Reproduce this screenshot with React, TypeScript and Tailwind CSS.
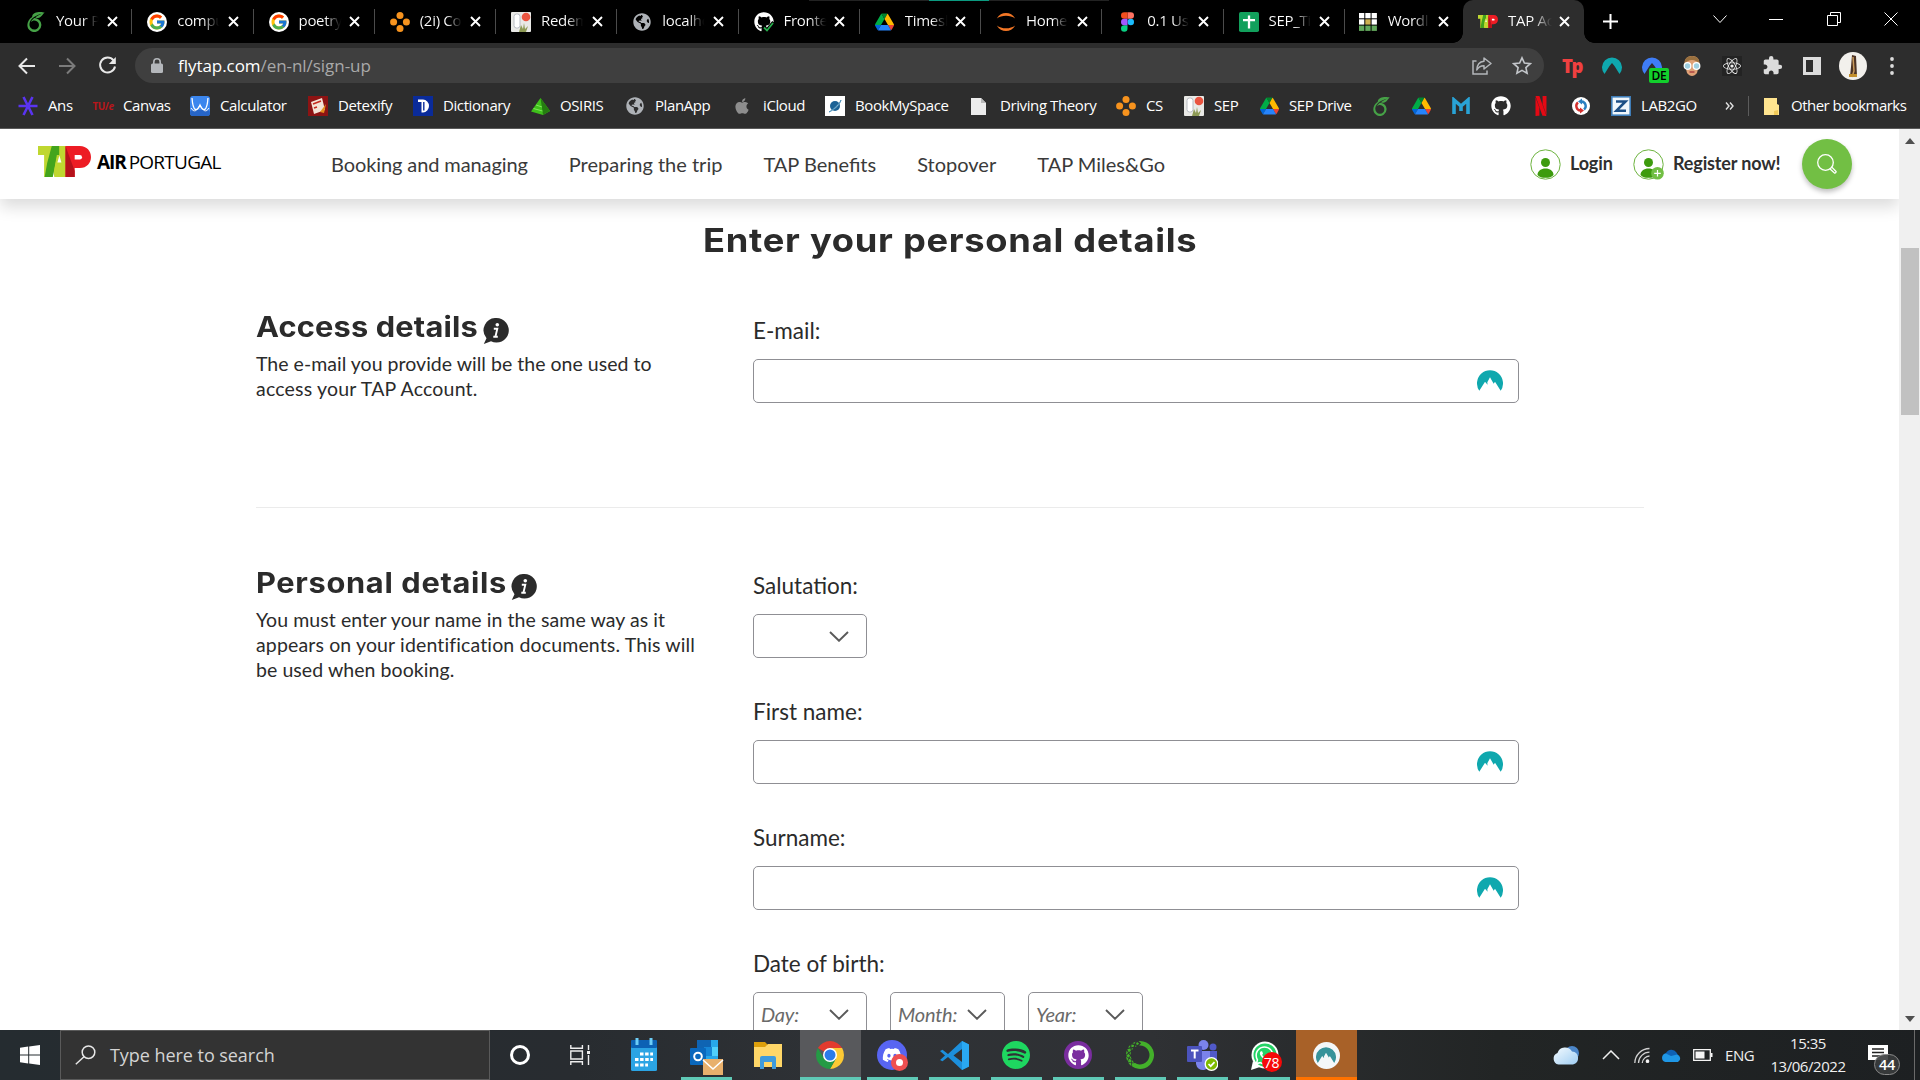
import React from "react";
import {
  SiOverleaf, SiNetflix, SiSpotify, SiAnaconda,
} from "react-icons/si";
import { FaGithub, FaApple, FaGlobeAmericas, FaReact, FaDiscord, FaWhatsapp } from "react-icons/fa";
import { FcGoogle } from "react-icons/fc";
import { MdExtension } from "react-icons/md";

/* ---------- favicons ---------- */

const Leaf = () => <SiOverleaf size={20} color="#46a247" />;
const Google = () => (
  <span className="flex h-5 w-5 items-center justify-center rounded-full bg-white"><FcGoogle size={18} /></span>
);
const Dots = () => (
  <svg width="20" height="20" viewBox="0 0 20 20" fill="#f7931e">
    <circle cx="10" cy="3.600" r="3.500" /><circle cx="10" cy="16.400" r="3.500" /><circle cx="3.600" cy="10" r="3.500" /><circle cx="16.400" cy="10" r="3.500" />
  </svg>
);
const Bottle = () => (
  <svg width="20" height="20" viewBox="0 0 20 20">
    <rect width="20" height="20" rx="1" fill="#e9e9e6" />
    <rect x="3" y="2" width="6" height="14" rx="2.500" fill="#fff" stroke="#b9bdc4" />
    <path d="M8 20l2-7 2 4 1-6 1 6 3-3-2 6z" fill="#8d9a55" />
    <circle cx="15" cy="5" r="4.300" fill="#ea5440" />
  </svg>
);
const Globe = () => (
  <span className="flex h-5 w-5 items-center justify-center"><FaGlobeAmericas size={18} color="#aeb2b7" /></span>
);
const GithubCheck = () => (
  <span className="relative block h-5 w-5">
    <FaGithub size={20} color="#fff" />
    <svg className="absolute -bottom-px -right-px" width="13" height="12" viewBox="0 0 13 12"><path d="M1.500 6.500l3.500 3.500L12 1.500" fill="none" stroke="#000" strokeWidth="4.500" /><path d="M2 6.500l3 3L11 2" fill="none" stroke="#27ae4c" strokeWidth="1.800" /></svg>
  </span>
);
const Drive = () => (
  <svg width="19" height="18" viewBox="0 0 87.3 78">
    <path d="m6.600 66.850 3.850 6.650c.8 1.400 1.950 2.500 3.300 3.300l13.750-23.800h-27.500c0 1.550.4 3.100 1.200 4.500z" fill="#0066da" />
    <path d="m43.650 25-13.750-23.800c-1.350.8-2.500 1.900-3.300 3.300l-25.400 44a9.060 9.060 0 0 0-1.200 4.500h27.500z" fill="#00ac47" />
    <path d="m73.550 76.800c1.350-.8 2.500-1.900 3.300-3.300l1.600-2.750 7.650-13.250c.8-1.400 1.200-2.950 1.200-4.500h-27.502l5.852 11.500z" fill="#ea4335" />
    <path d="m43.650 25 13.750-23.800c-1.350-.8-2.900-1.200-4.500-1.200h-18.500c-1.600 0-3.150.45-4.500 1.200z" fill="#00832d" />
    <path d="m59.800 53h-32.300l-13.750 23.800c1.350.8 2.900 1.200 4.500 1.200h50.800c1.600 0 3.150-.45 4.500-1.200z" fill="#2684fc" />
    <path d="m73.400 26.500-12.700-22c-.8-1.400-1.950-2.500-3.300-3.300l-13.750 23.800 16.150 28h27.450c0-1.550-.4-3.100-1.200-4.500z" fill="#ffba00" />
  </svg>
);
const Jupyter = () => (
  <svg width="20" height="20" viewBox="0 0 20 20" fill="#f37726">
    <path d="M.8 6.500C3 2.600 6.300 1 10 1s7 1.600 9.200 5.500C16.800 4.600 13.500 3.700 10 3.700S3.200 4.600.8 6.500z" />
    <path d="M.8 13.500C3 17.400 6.300 19 10 19s7-1.600 9.200-5.500c-2.400 1.900-5.700 2.800-9.200 2.800s-6.800-.9-9.200-2.800z" />
  </svg>
);
const Figma = () => (
  <svg width="13" height="20" viewBox="0 0 38 57">
    <path d="M19 28.500a9.500 9.500 0 1 1 19 0 9.500 9.500 0 0 1-19 0z" fill="#1abcfe" />
    <path d="M0 47.500A9.500 9.500 0 0 1 9.500 38H19v9.500a9.500 9.500 0 1 1-19 0z" fill="#0acf83" />
    <path d="M19 0v19h9.500a9.500 9.500 0 1 0 0-19z" fill="#ff7262" />
    <path d="M0 9.500A9.500 9.500 0 0 0 9.500 19H19V0H9.500A9.500 9.500 0 0 0 0 9.500z" fill="#f24e1e" />
    <path d="M0 28.500A9.500 9.500 0 0 0 9.500 38H19V19H9.500A9.500 9.500 0 0 0 0 28.500z" fill="#a259ff" />
  </svg>
);
const Sheets = () => (
  <svg width="20" height="20" viewBox="0 0 20 20">
    <rect width="20" height="20" rx="1.800" fill="#12a05c" />
    <path d="M10 3.500v13M4 8.200h12" stroke="#fff" strokeWidth="2.300" />
  </svg>
);
const Wordle = () => (
  <svg width="20" height="20" viewBox="0 0 20 20">
    <rect x="1" y="1" width="5.300" height="5.300" fill="#fff" /><rect x="7.300" y="1" width="5.300" height="5.300" fill="#fff" /><rect x="13.600" y="1" width="5.300" height="5.300" fill="#fff" />
    <rect x="1" y="7.300" width="5.300" height="5.300" fill="#fff" /><rect x="7.300" y="7.300" width="5.300" height="5.300" fill="#cdb050" /><rect x="13.600" y="7.300" width="5.300" height="5.300" fill="#fff" />
    <rect x="1" y="13.600" width="5.300" height="5.300" fill="#63a85c" /><rect x="7.300" y="13.600" width="5.300" height="5.300" fill="#63a85c" /><rect x="13.600" y="13.600" width="5.300" height="5.300" fill="#63a85c" />
  </svg>
);
const TapMark = ({ w, h }: { w: number; h: number }) => (
  <svg width={w} height={h} viewBox="0 0 52 31" preserveAspectRatio="none">
    <path d="M0 0h28v31H16l-1-6-1 6H6V9H0z" fill="#bfd730" />
    <path d="M13.500 0h7.500v9h-2L14.500 31H6.500l2.500-14z" fill="#43a41c" />
    <path d="M21 0h7v31h-7.500l-.5-5h-4.500L18.500 9H21z" fill="#bfd730" />
    <path d="M19 16.500l2-7 2 7z" fill="#fff" />
    <path d="M27 0h14c7 0 11 5 11 11s-4 11-11 11h-5v9h-9z" fill="#ed1c24" />
    <path d="M27 0l9 25v6h-9z" fill="#b5121b" />
    <path d="M36 9h5a2.200 2.200 0 0 1 0 4.400h-5z" fill="#fff" />
  </svg>
);
const Close = () => (
  <svg width="11" height="11" viewBox="0 0 11 11"><path d="M1 1l9 9M10 1l-9 9" stroke="#fff" strokeWidth="1.900" /></svg>
);

const tabs: { icon: React.ReactNode; text: string }[] = [
  { icon: <Leaf />, text: "Your P" },
  { icon: <Google />, text: "compu" },
  { icon: <Google />, text: "poetry" },
  { icon: <Dots />, text: "(2i) Co" },
  { icon: <Bottle />, text: "Redem" },
  { icon: <Globe />, text: "localho" },
  { icon: <GithubCheck />, text: "Fronte" },
  { icon: <Drive />, text: "Timesh" },
  { icon: <Jupyter />, text: "Home" },
  { icon: <Figma />, text: "0.1 Us" },
  { icon: <Sheets />, text: "SEP_Ti" },
  { icon: <Wordle />, text: "Wordl" },
];

function TabBody({ icon, text, active }: { icon: React.ReactNode; text: string; active?: boolean }) {
  return (
    <>
      <span className="flex w-5 justify-center">{icon}</span>
      <span className={"ml-2.5 block w-[44px] whitespace-nowrap bg-clip-text pb-0.5 text-transparent bg-linear-to-r from-white from-60% " + (active ? "to-[#2d2d2d]" : "to-black")}>{text}</span>
      <span className="ml-[6px] flex w-3 justify-center"><Close /></span>
    </>
  );
}

function TabStrip() {
  return (
    <div className="relative flex h-[43px] items-center bg-black pl-[11px] text-[15px] tracking-[-0.300px] text-white">
      <div className="absolute left-[809px] top-0 flex h-px w-[300px] bg-[#222]"><span className="ml-[120px] w-[60px] bg-[#0b9a80]" /></div>
      {tabs.map((t, i) => (
        <div key={i} className={"flex h-[25px] shrink-0 items-center border-r " + (i === 11 ? "w-[118.250px] border-transparent pl-[13px]" : "w-[121.250px] border-[#4b4b4b] pl-[15px]")}>
          <TabBody {...t} />
        </div>
      ))}
      <div className="relative flex h-full w-[121px] items-center rounded-t-[10px] bg-[#2d2d2d] pl-[15px]">
        <span className="absolute -left-2.5 bottom-0 h-2.5 w-2.5 bg-[radial-gradient(circle_at_0_0,transparent_9.500px,#2d2d2d_10px)]" />
        <span className="absolute -right-2.5 bottom-0 h-2.5 w-2.5 bg-[radial-gradient(circle_at_100%_0,transparent_9.500px,#2d2d2d_10px)]" />
        <TabBody icon={<TapMark w={20} h={13} />} text="TAP Ac" active />
      </div>
      <svg className="ml-[19px]" width="15" height="15" viewBox="0 0 15 15"><path d="M7.500 0v15M0 7.500h15" stroke="#fff" strokeWidth="2" /></svg>
      <div className="ml-auto flex items-center pr-[22px] pb-1.5">
        <svg width="14" height="14" viewBox="0 0 14 14" className="mr-[42px]"><path d="M.5 3.500l6.500 7 6.500-7" fill="none" stroke="#fff" /></svg>
        <svg width="14" height="14" viewBox="0 0 14 14" className="mr-[44px]"><path d="M0 7.500h14" stroke="#fff" /></svg>
        <svg width="14" height="14" viewBox="0 0 14 14" className="mr-[43px]"><path d="M.5 3.500h10v10H.5zM3.500 3.500v-3h10v10h-3" fill="none" stroke="#fff" /></svg>
        <svg width="14" height="14" viewBox="0 0 14 14"><path d="M.5.5l13 13M13.500.5l-13 13" stroke="#fff" /></svg>
      </div>
    </div>
  );
}

const NordArc = ({ size, color }: { size: number; color: string }) => (
  <svg width={size} height={size * 0.82} viewBox="0 0 26 21">
    <path d="M2.300 20.500A13 13 0 1 1 23.700 20.500L18 11.500l-1.300 2-3.700-6.300-2.700 5 .3 2.300-2.600-3z" fill={color} />
  </svg>
);

function Toolbar() {
  return (
    <div className="flex h-[45px] items-center bg-[#2d2d2d]">
      <div className="flex w-[135px] items-center pl-[18px]">
        <svg width="18" height="18" viewBox="0 0 18 18" className="mr-[22px]"><path d="M17 9H2M9 1.500L1.500 9 9 16.500" fill="none" stroke="#e8e8e8" strokeWidth="2" /></svg>
        <svg width="18" height="18" viewBox="0 0 18 18" className="mr-[22px]"><path d="M1 9h15M9 1.500L16.500 9 9 16.500" fill="none" stroke="#7b7b7b" strokeWidth="2" /></svg>
        <svg width="19" height="19" viewBox="0 0 19 19"><path d="M15.500 4.300A7.500 7.500 0 1 0 17 10.500" fill="none" stroke="#e8e8e8" strokeWidth="2" /><path d="M17.800 1v7h-7z" fill="#e8e8e8" /></svg>
      </div>
      <div className="flex h-[35px] w-[1409px] items-center rounded-full bg-[#3f3f3f] pl-4">
        <svg width="12" height="15" viewBox="0 0 12 15"><path d="M2.800 6V4a3.200 3.200 0 0 1 6.400 0v2" fill="none" stroke="#b4b7bb" strokeWidth="1.600" /><rect x="0" y="5.500" width="12" height="9.500" rx="1.500" fill="#b4b7bb" /></svg>
        <span className="ml-[15px] text-[17px] tracking-[-0.050px] text-[#a9a9a9]"><span className="text-white">flytap.com</span>/en-nl/sign-up</span>
        <svg width="20" height="18" viewBox="0 0 20 18" className="ml-auto mr-5" fill="none" stroke="#b4b7bb" strokeWidth="1.500"><path d="M4.500 4H1v13h14v-3.500" /><path d="M12 1l7 5.500-7 5.500V8.700C8.500 8.700 6.200 10 4.800 13 5 8 7.500 4.700 12 4.300z" strokeLinejoin="round" /></svg>
        <svg width="20" height="19" viewBox="0 0 20 19" className="mr-3" fill="none" stroke="#c3c6ca" strokeWidth="1.600"><path d="M10 1.800l2.400 5.300 5.800.6-4.300 3.900 1.200 5.700-5.100-2.900-5.100 2.900 1.200-5.700L1.800 7.700l5.800-.6z" /></svg>
      </div>
      <div className="ml-[18px] flex items-center gap-5">
        <span className="w-5 text-center text-[18.500px] font-extrabold leading-5 tracking-[-1.500px] text-[#f04040]">Tp</span>
        <svg width="20" height="17" viewBox="0 0 20 17"><path d="M2.500 17a10 10 0 1 1 15 0L12.500 9 10 6 7.500 9z" fill="#0fa8ae" /></svg>
        <span className="relative flex h-5 w-5 items-start pt-px">
          <svg width="20" height="17" viewBox="0 0 20 17"><path d="M2.500 17a10 10 0 1 1 15 0L12.500 9 10 6 7.500 9z" fill="#3f7df6" /></svg>
          <span className="absolute left-[7px] top-3 h-[15px] w-5 rounded-[2px] bg-[#12cf2c] text-center text-[12px] font-semibold leading-[15px] tracking-[-0.300px] text-black">DE</span>
        </span>
        <svg width="20" height="20" viewBox="0 0 20 20"><path d="M3 9C2 3 5 0 10 0s8 3 7 9l-2 8c-3 4-7 4-10 0z" fill="#dfa176" /><path d="M2.500 8C2 3 5 0 10 0s8 3 7.500 8C15 5 13 4 10 4S5 5 2.500 8z" fill="#99703f" /><circle cx="5.500" cy="10" r="3.300" fill="#9ecfe0" stroke="#fff" strokeWidth="1.300" /><circle cx="14.500" cy="10" r="3.300" fill="#9ecfe0" stroke="#fff" strokeWidth="1.300" /><path d="M7.500 16h5" stroke="#a5323a" strokeWidth="1.300" /></svg>
        <span className="flex h-5 w-5 items-center justify-center bg-[#232323]"><FaReact size={18} color="#eee" /></span>
        <MdExtension size={21} color="#dcdcdc" className="-mr-px" />
        <svg width="20" height="20" viewBox="0 0 20 20"><path d="M1 1h18v18H1zM4 4v12h7V4z" fill="#dcdcdc" fillRule="evenodd" /></svg>
        <svg width="28" height="28" viewBox="0 0 28 28" className="-mx-[3px]"><circle cx="14" cy="14" r="14" fill="#f2f0ec" /><path d="M13 3l4 1 1 20h-7l1-9z" fill="#4d3425" /><path d="M14 5l1 14-2 6" stroke="#c99a5b" strokeWidth="1.500" fill="none" /><path d="M10 22h8v3h-8z" fill="#c28f2c" /></svg>
        <svg width="20" height="18" viewBox="0 0 20 18" fill="#dcdcdc" className="-ml-0.5"><circle cx="10" cy="2" r="1.900" /><circle cx="10" cy="9" r="1.900" /><circle cx="10" cy="16" r="1.900" /></svg>
      </div>
    </div>
  );
}

/* ---------- bookmarks ---------- */

const bookmarks: { w: string; icon: React.ReactNode; text?: string }[] = [
  { w: "w-[75px]", text: "Ans", icon: <svg width="20" height="20" viewBox="0 0 20 20"><path d="M10 10L5.500 1M10 10l4.500-9M10 10H.5M10 10h9.500M10 10l-4.500 9M10 10l4.500 9" stroke="#5a34f0" strokeWidth="2.600" /></svg> },
  { w: "w-[97px]", text: "Canvas", icon: <span className="text-[10px] font-bold leading-5 tracking-[-0.500px] text-[#b8161b]">TU/<i>e</i></span> },
  { w: "w-[118px]", text: "Calculator", icon: <svg width="20" height="20" viewBox="0 0 20 20"><rect width="20" height="20" rx="3" fill="#3b86ee" /><rect y="14" width="20" height="6" rx="3" fill="#2665c8" /><path d="M2 2c1 14 5 14 8 7 3 7 7 7 8-7" fill="none" stroke="#fff" strokeWidth="1.300" /><path d="M1 12c3 5 6 3 9-3 3 6 6 8 9 3" fill="none" stroke="#fff" /></svg> },
  { w: "w-[105px]", text: "Detexify", icon: <svg width="20" height="20" viewBox="0 0 20 20"><rect width="20" height="20" fill="#8d1313" /><path d="M3 6l11-4 3 12-11 4z" fill="#f4e3d6" /><path d="M5 8l8-3M6 12l3-1" stroke="#c52a1d" strokeWidth="1.600" /><path d="M12 16l6-8-2 9z" fill="#e4901e" /></svg> },
  { w: "w-[117px]", text: "Dictionary", icon: <svg width="20" height="20" viewBox="0 0 20 20"><rect width="20" height="20" fill="#0a2b9a" /><path d="M5 3.500h5a6 6.500 0 0 1 0 13H8.500V6H5z" fill="#fff" /><path d="M10.800 6v8.500" stroke="#0a2b9a" strokeWidth="1.400" /></svg> },
  { w: "w-[95px]", text: "OSIRIS", icon: <svg width="19" height="17" viewBox="0 0 19 17"><path d="M9.500 0L19 13l-7 4L0 13.500z" fill="#3fc01b" /><path d="M9.500 0L19 13l-7 4z" fill="#257d10" /><path d="M5 7l6 2M2.500 10.500l9 2.500" stroke="#7ee85a" /></svg> },
  { w: "w-[108px]", text: "PlanApp", icon: <Globe /> },
  { w: "w-[92px]", text: "iCloud", icon: <FaApple size={18} color="#8d8d8d" className="-ml-0.5" /> },
  { w: "w-[145px]", text: "BookMySpace", icon: <svg width="20" height="20" viewBox="0 0 20 20"><rect width="20" height="20" fill="#fff" /><circle cx="10" cy="10" r="5" fill="#1b6296" /><path d="M4 16C7 14 14 9 16 4c-1 5-7 10-12 12z" fill="#fff" stroke="#3b86b3" strokeWidth=".8" /></svg> },
  { w: "w-[146px]", text: "Driving Theory", icon: <svg width="17" height="19" viewBox="0 0 17 19" className="-ml-1"><path d="M1 1h10l5 5v12H1z" fill="#ececec" /><path d="M11 1v5h5z" fill="#b9b9b9" /></svg> },
  { w: "w-[68px]", text: "CS", icon: <Dots /> },
  { w: "w-[75px]", text: "SEP", icon: <Bottle /> },
  { w: "w-[112px]", text: "SEP Drive", icon: <Drive /> },
  { w: "w-10", icon: <SiOverleaf size={19} color="#46a247" /> },
  { w: "w-10", icon: <Drive /> },
  { w: "w-10", icon: <svg width="18" height="18" viewBox="0 0 18 18"><path d="M2 17V3l7 6 7-6v14M9 9v5" fill="none" stroke="#29a3d6" strokeWidth="3.600" /></svg> },
  { w: "w-10", icon: <FaGithub size={20} color="#fff" /> },
  { w: "w-10", icon: <SiNetflix size={20} color="#e50914" /> },
  { w: "w-10", icon: <svg width="18" height="18" viewBox="0 0 18 18"><circle cx="9" cy="9" r="9" fill="#fff" /><path d="M9.500 4.500A4.500 4.500 0 0 1 12 12.500" fill="none" stroke="#2a7fc0" strokeWidth="2.400" /><path d="M8.500 13.500A4.500 4.500 0 0 1 6 5.500" fill="none" stroke="#d3312f" strokeWidth="2.400" /><path d="M10 1.500v6L6 4.500z" fill="#2a7fc0" /><path d="M8 16.500v-6l4 3z" fill="#d3312f" /></svg> },
  { w: "w-[110px]", text: "LAB2GO", icon: <svg width="20" height="20" viewBox="0 0 20 20"><rect x=".8" y=".8" width="18.400" height="18.400" fill="#f1f7fc" stroke="#3f7db8" strokeWidth="1.600" /><path d="M5 5.500h9.500L5.500 14.700H15" fill="none" stroke="#1c4f86" strokeWidth="2.600" /></svg> },
];

function BookmarksBar() {
  return (
    <div className="flex h-[41px] items-center border-b border-[#5a5a5a] bg-[#2d2d2d] pl-[18px] pb-1 text-[15px] tracking-[-0.400px] text-white">
      {bookmarks.map((b, i) => (
        <div key={i} className={"flex shrink-0 items-center gap-2.5 " + b.w}>
          <span className="flex h-5 w-5 shrink-0 items-center justify-center">{b.icon}</span>
          {b.text && <span className="whitespace-nowrap pb-0.5">{b.text}</span>}
        </div>
      ))}
      <svg width="9" height="8" viewBox="0 0 9 8" className="ml-1" fill="none" stroke="#e0e0e0" strokeWidth="1.400"><path d="M1 .5L4 4 1 7.500M5 .5L8 4 5 7.500" /></svg>
      <span className="ml-3.5 h-5 w-px bg-[#5c5c5c]" />
      <svg width="17" height="19" viewBox="0 0 17 19" className="ml-3.5"><path d="M1 1h13v6l2 1v10H1z" fill="#ffe48f" /><path d="M11 18V14l4-1v5z" fill="#f2ca58" /></svg>
      <span className="ml-[11px] whitespace-nowrap pb-0.5 tracking-[-0.520px]">Other bookmarks</span>
    </div>
  );
}

/* ---------- site ---------- */

const Person = ({ plus }: { plus?: boolean }) => (
  <svg width="31" height="31" viewBox="0 0 31 31">
    <circle cx="15.500" cy="15.500" r="14.700" fill="#fff" stroke="#6db33f" />
    <circle cx="15.500" cy="13.500" r="4.500" fill="#3d9b0d" />
    <path d="M7.500 26c0-4 3.500-6.500 8-6.500s8 2.500 8 6.500c-1.500 2-4.500 2.800-8 2.800S9 28 7.500 26z" fill="#3d9b0d" />
    {plus && <><circle cx="24.500" cy="24.300" r="6.300" fill="#72bf44" /><path d="M24.500 21v6.600M21.200 24.300h6.600" stroke="#fff" strokeWidth="1.200" /></>}
  </svg>
);

function SiteHeader() {
  return (
    <header className="relative z-10 flex h-[70px] shrink-0 items-center bg-white pl-[38px] font-[Lato] text-[20px] text-[#3a3a3a] shadow-[0_8px_15px_rgba(0,0,0,0.14)]">
      <span className="mb-1.5"><TapMark w={53} h={31} /></span>
      <span className="mb-1 ml-[6px] w-[234px] whitespace-nowrap font-['Open_Sans'] text-[19px] leading-none text-black">
        <b className="tracking-[-1.100px]">AIR</b><span className="ml-[3px] tracking-[-0.750px]">PORTUGAL</span>
      </span>
      <nav className="-mt-px flex gap-[41px] whitespace-nowrap pt-px">
        <span className="tracking-[-0.100px]">Booking and managing</span><span>Preparing the trip</span><span>TAP Benefits</span><span>Stopover</span><span>TAP Miles&amp;Go</span>
      </nav>
      <div className="ml-auto mr-[47px] flex items-center whitespace-nowrap text-[18px] font-bold tracking-[-0.150px] text-[#2f2f2f]">
        <Person /><span className="ml-[9px] w-[63px] pb-0.5">Login</span>
        <Person plus /><span className="ml-[9px] w-[129px] pb-0.5">Register now!</span>
        <span className="flex h-[50px] w-[50px] items-center justify-center rounded-full bg-[#72bf44] shadow-[0_3px_5px_rgba(0,0,0,0.25)]">
          <svg width="22" height="22" viewBox="0 0 22 22" fill="none" stroke="#fff" strokeWidth="1.300"><circle cx="9.500" cy="9.500" r="7.800" /><path d="M13.800 15.800l4.600 4.200q1.600.4 1.700-1.500l-4.300-4.400" /></svg>
        </span>
      </div>
    </header>
  );
}

const Info = () => (
  <svg width="26" height="26" viewBox="0 0 26 26">
    <path d="M13.500 0A12.300 12.300 0 1 1 8 23.300L.8 26l2.700-5.800A12.300 12.300 0 0 1 13.500 0z" fill="#2b2b2b" />
    <circle cx="14.300" cy="6.800" r="1.800" fill="#fff" />
    <path d="M10.800 10.700h3.500l-1.900 8h2.400M10.300 18.700h2" fill="none" stroke="#fff" strokeWidth="1.900" />
  </svg>
);
const Label = ({ children }: { children: React.ReactNode }) => (
  <div className="h-[43px] text-[22.500px] leading-[30px]">{children}</div>
);
const Input = () => (
  <div className="flex h-[44px] w-[766px] items-center justify-end rounded-[5px] border border-[#8f8f94] bg-white pr-[15px]"><NordArc size={26} color="#0fa8ae" /></div>
);
const Select = ({ w, text }: { w: string; text?: string }) => (
  <div className={"flex h-[44px] items-center rounded-[5px] border border-[#8f8f94] bg-white pl-[7px] pr-[17px] text-[20px] italic tracking-[-0.200px] text-[#6a6a6a] " + w}>
    <span>{text}</span>
    <svg className="ml-auto" width="20" height="11" viewBox="0 0 20 11"><path d="M1 1l9 8.800L19 1" fill="none" stroke="#5a5a5a" strokeWidth="1.900" /></svg>
  </div>
);

function Page() {
  return (
    <div className="h-[901px] w-[1899px] overflow-hidden bg-white font-[Lato] text-[#2b2b2b]">
      <SiteHeader />
      <h1 className="mt-[19px] ml-[703px] h-[44px] w-max origin-left scale-x-110 whitespace-nowrap font-[Inter] text-[33px] font-bold leading-[44px] tracking-[0.650px]">Enter your personal details</h1>
      <section className="ml-[256px] mt-[47px] flex h-[199px] w-[1388px] border-b border-[#ebebeb]">
        <div className="-mt-[5px] w-[497px]">
          <h2 className="flex h-[46px] items-center"><span className="w-[227px] whitespace-nowrap font-[Inter] text-[28px] font-bold leading-10 tracking-[0.140px]"><span className="block w-max origin-left scale-x-110">Access details</span></span><span className="mt-2"><Info /></span></h2>
          <p className="mt-px w-[450px] text-[19.500px] leading-[25px]"><span className="tracking-[0.020px]">The e-mail you provide will be the one used to</span><br /><span className="tracking-[0.200px]">access your TAP Account.</span></p>
        </div>
        <div className="pt-[7px]"><Label>E-mail:</Label><Input /></div>
      </section>
      <section className="ml-[256px] mt-[56px] flex">
        <div className="-mt-1 w-[497px]">
          <h2 className="flex h-[46px] items-center"><span className="w-[255px] whitespace-nowrap font-[Inter] text-[28px] font-bold leading-10 tracking-[0.600px]"><span className="block w-max origin-left scale-x-110">Personal details</span></span><span className="mt-2"><Info /></span></h2>
          <p className="mt-px w-[470px] whitespace-nowrap text-[19.500px] leading-[25px] tracking-[0.070px]">You must enter your name in the same way as it<br /><span className="tracking-[0.140px]">appears on your identification documents. This will</span><br />be used when booking.</p>
        </div>
        <div className="flex flex-col gap-[39px] pt-[7px]">
          <div><Label>Salutation:</Label><Select w="w-[114px]" /></div>
          <div><Label>First name:</Label><Input /></div>
          <div><Label>Surname:</Label><Input /></div>
          <div><Label>Date of birth:</Label>
            <div className="flex gap-[23px]"><Select w="w-[114px]" text="Day:" /><Select w="w-[115px]" text="Month:" /><Select w="w-[115px]" text="Year:" /></div>
          </div>
        </div>
      </section>
    </div>
  );
}

function Scrollbar() {
  return (
    <div className="flex h-[901px] w-[21px] flex-col items-center bg-[#f0f0f0]">
      <svg width="10" height="6" viewBox="0 0 10 6" className="mt-[9px]"><path d="M5 0l5 6H0z" fill="#505050" /></svg>
      <div className="mt-[104px] h-[167px] w-[18px] bg-[#c1c1c1]" />
      <svg width="10" height="6" viewBox="0 0 10 6" className="mb-2 mt-auto"><path d="M5 6L0 0h10z" fill="#505050" /></svg>
    </div>
  );
}

/* ---------- taskbar ---------- */

const Vscode = () => (
  <svg width="31" height="31" viewBox="0 0 31 31">
    <path d="M23 1L9 14 3.500 9.800 1 11l5 4.500L1 20l2.500 1.200L9 17l14 13 7-3.500v-22zM23 9v13l-8.500-6.500z" fill="#1c8fdc" fillRule="evenodd" />
    <path d="M23 1l7 3.500v22L23 30z" fill="#2aa8f2" />
  </svg>
);
const Chrome = () => (
  <svg width="28" height="28" viewBox="0 0 28 28">
    <path d="M14 14L1.880 7A14 14 0 0 1 26.120 7L14 7.500z" fill="#e33b2e" />
    <path d="M14 7h12.120A14 14 0 0 1 14 28l6-10.500z" fill="#fcc934" />
    <path d="M1.880 7A14 14 0 0 0 14 28l6.060-10.500L14 20l-6-2.500z" fill="#249a45" />
    <circle cx="14" cy="14" r="7" fill="#fff" /><circle cx="14" cy="14" r="5.500" fill="#2a7bea" />
  </svg>
);
const apps: { icon: React.ReactNode; cell?: string; line?: string }[] = [
  { icon: <svg width="26" height="34" viewBox="0 0 26 34"><rect y="3" width="26" height="30" rx="1.500" fill="#2ba4e4" /><rect y="2" width="26" height="8" rx="1" fill="#0c62b4" /><path d="M6 0v7M20 0v7" stroke="#6ccdf7" strokeWidth="3" /><path d="M9 16h13M4 21.500h18M4 27h13" stroke="#fff" strokeWidth="3" strokeDasharray="3.500 1.600" /></svg> },
  { icon: <svg width="34" height="36" viewBox="0 0 34 36" className="ml-0.5 mt-1"><rect x="7" y="1" width="21" height="24" fill="#28a8ea" /><path d="M7 1h14v8H7z" fill="#0f64b3" /><path d="M14 8h8v9h-8z" fill="#1685d6" /><path d="M22 8h6v9h-6z" fill="#50d0fb" /><rect y="9" width="16" height="17" rx="1" fill="#0a68bd" /><circle cx="8" cy="17.500" r="3.800" fill="none" stroke="#fff" strokeWidth="2" /><rect x="13" y="20" width="20" height="16" fill="#e8b06c" /><path d="M13 21l10 9 10-9" fill="none" stroke="#fff" strokeWidth="1.600" /></svg>, line: "w-[51px] bg-[#5fc9b6]" },
  { icon: <svg width="28" height="29" viewBox="0 0 28 29"><path d="M0 1h11l3 3h14v10H0z" fill="#dd9f0b" /><path d="M0 6h11l3-3h14v23H0z" fill="#ffd768" /><path d="M6 28V17a2 2 0 0 1 2-2h12a2 2 0 0 1 2 2v11h-4v-7h-8v7z" fill="#3e9bdc" /></svg> },
  { icon: <Chrome />, cell: "bg-[#58595c]", line: "w-full bg-[#5fc9b6]" },
  { icon: <span className="relative flex h-[30px] w-[30px] items-center justify-center rounded-full bg-[#5865f2]"><FaDiscord size={20} color="#fff" /><span className="absolute -bottom-px -right-px flex h-[17px] w-[17px] items-center justify-center rounded-full bg-[#ee4f51]"><span className="h-[7px] w-[7px] rounded-full bg-white" /></span></span>, line: "w-[51px] bg-[#5fc9b6]" },
  { icon: <Vscode />, line: "w-[51px] bg-[#5fc9b6]" },
  { icon: <SiSpotify size={28} color="#1ed760" />, line: "w-[51px] bg-[#5fc9b6]" },
  { icon: <span className="flex h-[28px] w-[28px] items-center justify-center rounded-full bg-[#7a2d9f]"><FaGithub size={21} color="#fff" /></span>, line: "w-[51px] bg-[#5fc9b6]" },
  { icon: <SiAnaconda size={28} color="#43b02a" />, line: "w-[51px] bg-[#5fc9b6]" },
  { icon: <svg width="31" height="32" viewBox="0 0 31 32"><circle cx="16.500" cy="6" r="5" fill="#7b83eb" /><circle cx="26" cy="8" r="3.500" fill="#5059c9" /><path d="M20 12h10v9a6 6 0 0 1-10 3z" fill="#5059c9" /><path d="M9 12h14v11a7 7 0 0 1-14 2z" fill="#7b83eb" /><rect y="7" width="15" height="16" rx="1" fill="#4b53bc" /><path d="M4 11.500h7.500M7.700 11.500v8" stroke="#fff" strokeWidth="2" /><circle cx="24.500" cy="25" r="6.300" fill="#7fba00" stroke="#fff" strokeWidth="1.300" /><path d="M21.500 25l2.200 2.200 3.800-4" fill="none" stroke="#fff" strokeWidth="1.700" /></svg>, line: "w-[51px] bg-[#5fc9b6]" },
  { icon: <span className="relative ml-px flex h-7 w-7 items-center justify-center"><svg className="absolute" width="28" height="29" viewBox="0 0 28 29"><circle cx="14" cy="14" r="13.500" fill="#fff" /><path d="M0 29l2-9 7 6z" fill="#fff" /><circle cx="14" cy="14" r="11.500" fill="#25d366" /></svg><FaWhatsapp size={21} color="#fff" className="relative" /><span className="absolute left-[11px] top-[11px] flex h-5 w-5 items-center justify-center rounded-full bg-[#f60808] text-[14px] tracking-[-0.300px] text-white">78</span></span>, line: "w-[51px] bg-[#5fc9b6]" },
  { icon: <span className="flex h-[27px] w-[27px] items-center justify-center overflow-hidden rounded-full bg-[#f4f7f8]"><NordArc size={20} color="#37939a" /></span>, cell: "bg-[#a86128]", line: "w-full bg-[#ff7200]" },
];

function Taskbar() {
  return (
    <div className="flex h-[50px] items-center bg-[linear-gradient(90deg,#252c30_0%,#282c30_30%,#2f3236_45%,#2f3134_60%,#222525_78%,#1d2022_100%)] text-[#f0f0f0]">
      <div className="flex w-[60px] justify-center"><svg width="20" height="20" viewBox="0 0 20 20" fill="#fff"><path d="M0 2.800L8.200 1.600v7.900H0zM9.200 1.500L20 0v9.500H9.200zM0 10.500h8.200v7.900L0 17.200zM9.200 10.500H20V20L9.200 18.500z" /></svg></div>
      <div className="flex h-[50px] w-[430px] items-center border border-[#5a5a5a] bg-[#333] pl-[14px] text-[18px] tracking-[-0.050px] text-[#d4d4d4]">
        <svg width="21" height="20" viewBox="0 0 21 20" fill="none" stroke="#e8e8e8" strokeWidth="1.500"><circle cx="13.500" cy="7.200" r="6.300" /><path d="M9 11.800L.8 19.300" /></svg>
        <span className="ml-[14px]">Type here to search</span>
      </div>
      <div className="flex w-[60px] justify-center"><span className="h-5 w-5 rounded-full border-[3px] border-white" /></div>
      <div className="flex w-[60px] justify-center"><svg width="20" height="20" viewBox="0 0 20 20" fill="none" stroke="#eee" strokeWidth="1.400"><path d="M.8 0v3.200h11.600V0M.8 6h11.600v8H.8zM.8 20v-3.200h11.600V20M18.500 0v5M18.500 10v10" /><path d="M17 7.500h3" strokeWidth="3" /></svg></div>
      <div className="ml-[3px] flex h-full">
        {apps.map((a, i) => (
          <div key={i} className="flex w-[62px] justify-center">
            <div className={"flex h-full w-[61px] flex-col items-center " + (a.cell ?? "")}>
              <div className="flex h-[47px] items-center pt-[3px]">{a.icon}</div>
              {a.line && <div className={"h-[3px] " + a.line} />}
            </div>
          </div>
        ))}
      </div>
      <div className="ml-auto flex h-full items-center text-[15px] tracking-[-0.450px]">
        <svg width="28" height="20" viewBox="0 0 28 20"><defs><linearGradient id="cl" x1="0" y1="0" x2="1" y2="1"><stop offset="0" stopColor="#f4fbff" /><stop offset="1" stopColor="#9fcdf2" /></linearGradient></defs><circle cx="20" cy="8" r="7" fill="#4c86c8" /><path d="M6.500 19.500A6 6 0 0 1 5.500 8 8 8 0 0 1 20 6.500a6.600 6.600 0 0 1 1 13z" fill="url(#cl)" /></svg>
        <svg className="ml-[22px]" width="18" height="10" viewBox="0 0 18 10"><path d="M1 9l8-8 8 8" fill="none" stroke="#f0f0f0" strokeWidth="1.500" /></svg>
        <svg className="ml-[14px]" width="16" height="17" viewBox="0 0 16 17" fill="none" stroke="#f0f0f0" strokeWidth="1.300"><path d="M.8 16A15 15 0 0 1 15.500 1.500M4.500 16A11 11 0 0 1 15.500 5.200M8.300 16a7.500 7.500 0 0 1 7.200-7" opacity=".85" /><circle cx="13.500" cy="14.200" r="1.200" fill="#fff" /></svg>
        <svg className="ml-[11px]" width="21" height="13" viewBox="0 0 21 13"><path d="M3 9A4 4 0 0 1 5 4a6 6 0 0 1 10.500-.5L18 8z" fill="#0f62b5" /><path d="M4.500 13A4.300 4.300 0 0 1 5 4.500l5 2.500 6-1.500A4 4 0 0 1 17 13z" fill="#1f97e6" /></svg>
        <svg className="ml-[11px]" width="20" height="12" viewBox="0 0 20 12"><path d="M.7.700h16.600v10.600H.700z" fill="none" stroke="#f5f5f5" strokeWidth="1.300" /><path d="M2.500 2.500h9v7h-9zM18 4h1.500v4H18z" fill="#f5f5f5" /></svg>
        <span className="ml-[12px] w-[29px]">ENG</span>
        <div className="ml-[16px] flex w-[76px] flex-col items-center leading-[23px]"><span>15:35</span><span>13/06/2022</span></div>
        <div className="relative ml-[22px] h-full w-[46px]">
          <svg className="absolute left-0 top-[14px]" width="21" height="20" viewBox="0 0 21 20"><path d="M0 1h20v15h-3l-4 4v-4H0z" fill="#fff" /><path d="M4 5h12M4 8.500h12M4 12h8" stroke="#222" strokeWidth="1.300" /></svg>
          <span className="absolute left-[6px] top-[24px] flex h-[21px] w-[26px] items-center justify-center rounded-full border border-[#8b8b8b] bg-[#3a3c3d]/90 text-[14.500px] font-semibold tracking-[-0.200px] text-white">44</span>
        </div>
        <span className="mr-[5px] h-full w-px bg-[#6a6a6a]" />
      </div>
    </div>
  );
}

export default function App() {
  return (
    <div className="flex h-[1080px] w-[1920px] flex-col overflow-hidden bg-white font-['Open_Sans',sans-serif]">
      <TabStrip />
      <Toolbar />
      <BookmarksBar />
      <div className="flex"><Page /><Scrollbar /></div>
      <Taskbar />
    </div>
  );
}
